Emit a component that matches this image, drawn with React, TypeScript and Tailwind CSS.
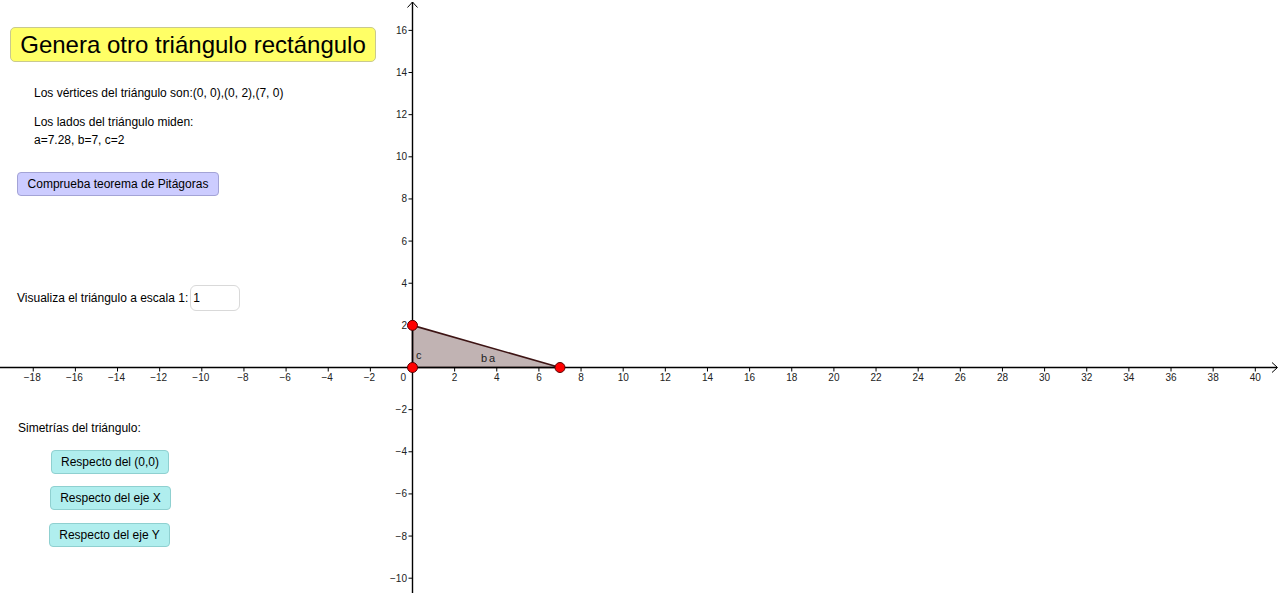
import React from "react";

const OX = 412.5;
const OY = 367.5;
const U = 21.07;

const fmt = (n: number) => (n < 0 ? "\u2212" + Math.abs(n) : String(n));

function Graph() {
  const xs: number[] = [];
  for (let i = -18; i <= 40; i += 2) if (i !== 0) xs.push(i);
  const ys: number[] = [];
  for (let i = -10; i <= 16; i += 2) if (i !== 0) ys.push(i);
  const px = (x: number) => OX + x * U;
  const py = (y: number) => OY - y * U;
  return (
    <svg
      className="absolute inset-0"
      width={1280}
      height={596}
      viewBox="0 0 1280 596"
      style={{ fontFamily: '"Liberation Sans", Arial, sans-serif' }}
    >
      {/* triangle */}
      <polygon
        points={`${px(0)},${py(0)} ${px(0)},${py(2)} ${px(7)},${py(0)}`}
        fill="#c1b3b3"
        stroke="#3d1414"
        strokeWidth={1.6}
        strokeLinejoin="round"
      />
      {/* axes */}
      <line x1={0} y1={OY} x2={1277} y2={OY} stroke="#000" strokeWidth={1.4} />
      <line x1={OX} y1={2} x2={OX} y2={593} stroke="#000" strokeWidth={1.4} />
      <polyline points="1272,362.5 1277.5,367.5 1272,372.5" fill="none" stroke="#000" strokeWidth={1} />
      <polyline points="407.5,7.5 412.5,2 417.5,7.5" fill="none" stroke="#000" strokeWidth={1} />
      {xs.map((x) => (
        <g key={"x" + x}>
          <line x1={px(x)} y1={OY} x2={px(x)} y2={OY + 4} stroke="#000" strokeWidth={1} />
          <text x={px(x) + (x < 0 ? -1 : 0)} y={OY + 13} fontSize={10} textAnchor="middle" fill="#222">
            {fmt(x)}
          </text>
        </g>
      ))}
      {ys.map((y) => (
        <g key={"y" + y}>
          <line x1={OX - 4} y1={py(y)} x2={OX} y2={py(y)} stroke="#000" strokeWidth={1} />
          <text x={OX - 5.5} y={py(y) + 3.5} fontSize={10} textAnchor="end" fill="#222">
            {fmt(y)}
          </text>
        </g>
      ))}
      <text x={OX - 6.5} y={OY + 13} fontSize={10} textAnchor="end" fill="#222">
        0
      </text>
      {/* side labels */}
      <text x={416} y={359} fontSize={11} fill="#222">
        c
      </text>
      <text x={481} y={362} fontSize={11} fill="#222">
        b
      </text>
      <text x={489} y={362} fontSize={11} fill="#222">
        a
      </text>
      {/* points */}
      {[
        [0, 0],
        [0, 2],
        [7, 0],
      ].map(([x, y]) => (
        <circle key={`${x}-${y}`} cx={px(x)} cy={py(y)} r={5} fill="#ff0000" stroke="#5a0000" strokeWidth={1} />
      ))}
    </svg>
  );
}

export default function App() {
  return (
    <div
      className="relative w-[1280px] h-[596px] overflow-hidden bg-white text-black"
      style={{ fontFamily: '"Liberation Sans", Arial, sans-serif' }}
    >
      <Graph />
      <div className="relative flex flex-col items-start w-[390px]">
        <button className="mt-[27px] ml-[10px] w-[366px] h-[35px] rounded-[5px] border border-[#c9c98f] bg-[#ffff66] text-[24px] leading-none text-black flex items-center justify-center">
          Genera otro triángulo rectángulo
        </button>
        <p className="mt-[24px] ml-[34px] text-[12px] leading-[14px]">
          Los vértices del triángulo son:(0, 0),(0, 2),(7, 0)
        </p>
        <p className="mt-[13px] ml-[34px] text-[12px] leading-[18px]">
          Los lados del triángulo miden:
          <br />
          a=7.28, b=7, c=2
        </p>
        <button className="mt-[23px] ml-[17px] w-[202px] h-[24px] rounded-[4px] border border-[#a3a3d6] bg-[#ccccff] text-[12px] leading-none flex items-center justify-center">
          Comprueba teorema de Pitágoras
        </button>
        <div className="mt-[89px] ml-[17px] flex items-center h-[26px]">
          <span className="text-[12px] leading-none">Visualiza el triángulo a escala 1:</span>
          <div className="ml-[2px] w-[50px] h-[26px] rounded-[6px] border border-[#d9d9d9] bg-white flex items-center pl-[2px] text-[12px]">
            1
          </div>
        </div>
        <p className="mt-[110px] ml-[18px] text-[12px] leading-[14px]">Simetrías del triángulo:</p>
        <button className="mt-[15px] ml-[51px] w-[118px] h-[24px] rounded-[4px] border border-[#8fd0d0] bg-[#b0eeee] text-[12px] leading-none flex items-center justify-center">
          Respecto del (0,0)
        </button>
        <button className="mt-[12px] ml-[50px] w-[121px] h-[24px] rounded-[4px] border border-[#8fd0d0] bg-[#b0eeee] text-[12px] leading-none flex items-center justify-center">
          Respecto del eje X
        </button>
        <button className="mt-[13px] ml-[49px] w-[121px] h-[24px] rounded-[4px] border border-[#8fd0d0] bg-[#b0eeee] text-[12px] leading-none flex items-center justify-center">
          Respecto del eje Y
        </button>
      </div>
    </div>
  );
}
